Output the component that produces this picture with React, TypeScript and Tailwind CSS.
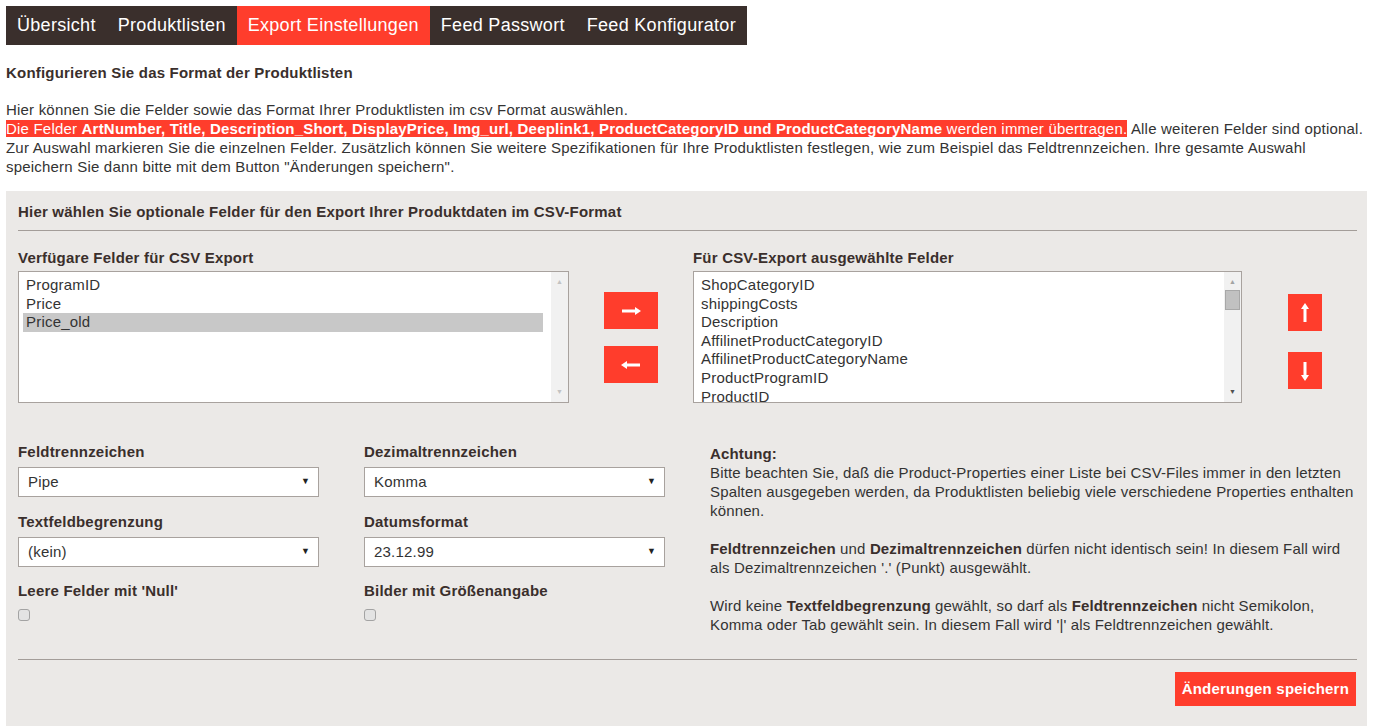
import React from "react";

const RED = "bg-[#ff3d2c]";

const tabs = ["Übersicht", "Produktlisten", "Export Einstellungen", "Feed Passwort", "Feed Konfigurator"];

const available = ["ProgramID", "Price", "Price_old"];
const selected = [
  "ShopCategoryID",
  "shippingCosts",
  "Description",
  "AffilinetProductCategoryID",
  "AffilinetProductCategoryName",
  "ProductProgramID",
  "ProductID",
];

function ListBox({ items, active, thumb }: { items: string[]; active?: string; thumb?: boolean }) {
  return (
    <div className="flex h-[132px] overflow-hidden border border-[#a8a29e] bg-white">
      <div className="flex-1 overflow-hidden pt-[4px] pl-[4px] pr-[8px]">
        {items.map((item) => (
          <div
            key={item}
            className={`h-[18.6px] px-[3px] text-[15px] leading-[18.6px] text-[#333] ${item === active ? "bg-[#c8c8c8]" : ""}`}
          >
            {item}
          </div>
        ))}
      </div>
      <div className="flex w-[17px] flex-col items-center bg-[#f1f1f1] py-[4px]">
        <span className={`text-[7px] leading-[12px] ${thumb ? "text-[#a3a3a3]" : "text-[#c2c2c2]"}`}>▲</span>
        {thumb && <div className="mt-[2px] h-[20px] w-[15px] border border-[#a8a8a8] bg-[#c1c1c1]" />}
        <span className={`mt-auto text-[7px] leading-[12px] ${thumb ? "text-[#505050]" : "text-[#c2c2c2]"}`}>▼</span>
      </div>
    </div>
  );
}

function Arrow({ dir }: { dir: "right" | "left" | "up" | "down" }) {
  const shapes: Record<string, string> = {
    right: "M1 8.5h13V6l6 4-6 4v-2.5H1z",
    left: "M19 8.5H6V6l-6 4 6 4v-2.5h13z",
    up: "M8.5 19V6H6l4-6 4 6h-2.5v13z",
    down: "M8.5 1v13H6l4 6 4-6h-2.5V1z",
  };
  return (
    <svg width="20" height="20" viewBox="0 0 20 20">
      <path d={shapes[dir]} fill="white" />
    </svg>
  );
}

function Select({ value }: { value: string }) {
  return (
    <div className="flex h-[30px] items-center justify-between border border-[#a8a29e] bg-white pl-[9px] pr-[8px] text-[15px] text-[#333]">
      <span>{value}</span>
      <span className="text-[9px] text-[#222]">▼</span>
    </div>
  );
}

function Label({ children }: { children: React.ReactNode }) {
  return <div className="text-[15px] font-bold leading-[18px] text-[#3a2f2c]">{children}</div>;
}

function Checkbox() {
  return <div className="mt-[9px] h-[12px] w-[12px] rounded-[3px] border border-[#a3a3a3] bg-[#e3e3e3]" />;
}

export default function App() {
  return (
    <div className="min-h-screen bg-white px-[6px] pt-[6px] font-['Liberation_Sans',Arial,sans-serif] tracking-[0.2px] text-[#333]">
      <nav className="flex w-fit bg-[#3a2f2c]">
        {tabs.map((tab) => (
          <div
            key={tab}
            className={`h-[39px] px-[11px] text-[18px] leading-[39px] tracking-[0.3px] text-white ${tab === "Export Einstellungen" ? RED : ""}`}
          >
            {tab}
          </div>
        ))}
      </nav>

      <h1 className="mt-[19px] text-[15px] font-bold leading-[18px] text-[#3a2f2c]">
        Konfigurieren Sie das Format der Produktlisten
      </h1>

      <p className="mt-[18px] text-[15px] leading-[19px] text-[#333]">
        Hier können Sie die Felder sowie das Format Ihrer Produktlisten im csv Format auswählen.
        <br />
        <span className={`${RED} text-white`}>
          Die Felder{" "}
          <b>ArtNumber, Title, Description_Short, DisplayPrice, Img_url, Deeplink1, ProductCategoryID und ProductCategoryName</b>{" "}
          werden immer übertragen.
        </span>{" "}
        Alle weiteren Felder sind optional.
        <br />
        Zur Auswahl markieren Sie die einzelnen Felder. Zusätzlich können Sie weitere Spezifikationen für Ihre
        Produktlisten festlegen, wie zum Beispiel das Feldtrennzeichen. Ihre gesamte Auswahl
        <br />
        speichern Sie dann bitte mit dem Button "Änderungen speichern".
      </p>

      <section className="mt-[15px] bg-[#ebe9e7] px-[12px] pt-[12px] pb-[20px]">
        <h2 className="text-[15px] font-bold leading-[18px] text-[#3a2f2c]">
          Hier wählen Sie optionale Felder für den Export Ihrer Produktdaten im CSV-Format
        </h2>
        <div className="mt-[9px] mr-[-2px] border-t border-[#a39d99]" />

        <div className="mt-[18px] flex">
          <div className="w-[551px]">
            <Label>Verfügare Felder für CSV Export</Label>
            <div className="mt-[4px]">
              <ListBox items={available} active="Price_old" />
            </div>
          </div>
          <div className="flex w-[124px] flex-col items-center pt-[43px]">
            <button className={`flex h-[37px] w-[54px] items-center justify-center ${RED}`}>
              <Arrow dir="right" />
            </button>
            <button className={`mt-[17px] flex h-[37px] w-[54px] items-center justify-center ${RED}`}>
              <Arrow dir="left" />
            </button>
          </div>
          <div className="w-[549px]">
            <Label>Für CSV-Export ausgewählte Felder</Label>
            <div className="mt-[4px]">
              <ListBox items={selected} thumb />
            </div>
          </div>
          <div className="flex flex-col pl-[46px] pt-[45px]">
            <button className={`flex h-[37px] w-[34px] items-center justify-center ${RED}`}>
              <Arrow dir="up" />
            </button>
            <button className={`mt-[21px] flex h-[37px] w-[34px] items-center justify-center ${RED}`}>
              <Arrow dir="down" />
            </button>
          </div>
        </div>

        <div className="mt-[40px] flex items-start">
          <div className="grid w-[647px] grid-cols-[301px_301px] content-start gap-x-[45px]">
            <div>
              <Label>Feldtrennzeichen</Label>
              <div className="mt-[6px]">
                <Select value="Pipe" />
              </div>
            </div>
            <div>
              <Label>Dezimaltrennzeichen</Label>
              <div className="mt-[6px]">
                <Select value="Komma" />
              </div>
            </div>
            <div className="mt-[16px]">
              <Label>Textfeldbegrenzung</Label>
              <div className="mt-[6px]">
                <Select value="(kein)" />
              </div>
            </div>
            <div className="mt-[16px]">
              <Label>Datumsformat</Label>
              <div className="mt-[6px]">
                <Select value="23.12.99" />
              </div>
            </div>
            <div className="mt-[15px]">
              <Label>Leere Felder mit 'Null'</Label>
              <Checkbox />
            </div>
            <div className="mt-[15px]">
              <Label>Bilder mit Größenangabe</Label>
              <Checkbox />
            </div>
          </div>
          <div className="ml-[45px] mt-[1px] flex-1 whitespace-nowrap text-[15px] leading-[19px] tracking-[0.15px] text-[#333]">
            <b className="text-[#3a2f2c]">Achtung:</b>
            <br />
            Bitte beachten Sie, daß die Product-Properties einer Liste bei CSV-Files immer in den letzten
            <br />
            Spalten ausgegeben werden, da Produktlisten beliebig viele verschiedene Properties enthalten
            <br />
            können.
            <br />
            <br />
            <b className="text-[#3a2f2c]">Feldtrennzeichen</b> und <b className="text-[#3a2f2c]">Dezimaltrennzeichen</b>{" "}
            dürfen nicht identisch sein! In diesem Fall wird
            <br />
            als Dezimaltrennzeichen '.' (Punkt) ausgewählt.
            <br />
            <br />
            Wird keine <b className="text-[#3a2f2c]">Textfeldbegrenzung</b> gewählt, so darf als{" "}
            <b className="text-[#3a2f2c]">Feldtrennzeichen</b> nicht Semikolon,
            <br />
            Komma oder Tab gewählt sein. In diesem Fall wird '|' als Feldtrennzeichen gewählt.
          </div>
        </div>

        <div className="mt-[25px] mr-[-2px] border-t border-[#a39d99]" />
        <div className="mt-[12px] mr-[-1px] flex justify-end">
          <button className={`h-[34px] px-[7px] text-[15px] font-bold text-white ${RED}`}>Änderungen speichern</button>
        </div>
      </section>
    </div>
  );
}
